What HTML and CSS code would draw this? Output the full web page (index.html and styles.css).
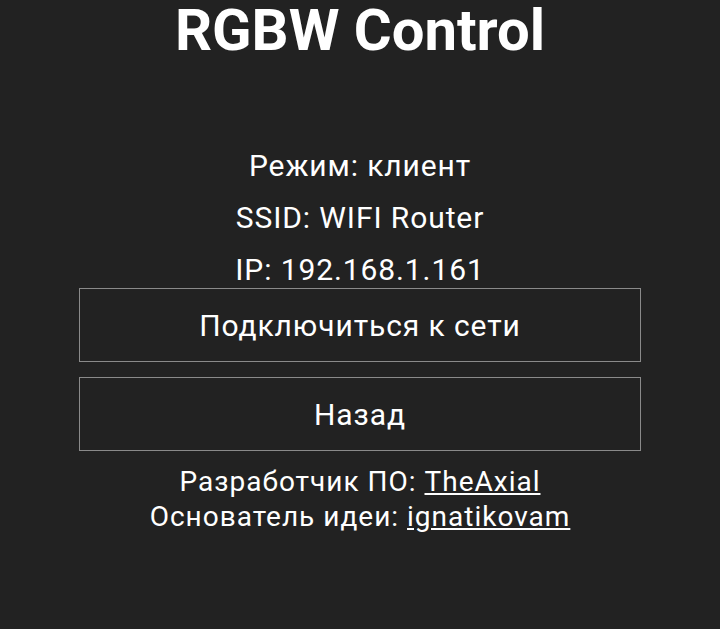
FILE: index.html
```html
<!DOCTYPE html>
<html lang="ru">
<head>
<meta charset="utf-8">
<link rel="stylesheet" href="styles.css">
</head>
<body>
<div class="page">
  <h1 class="title">RGBW Control</h1>
  <div class="info">
    <p class="line">Режим: клиент</p>
    <p class="line">SSID: WIFI Router</p>
    <p class="line">IP: 192.168.1.161</p>
  </div>
  <div class="buttons">
    <button class="btn">Подключиться к сети</button>
    <button class="btn">Назад</button>
  </div>
  <div class="footer">
    <div>Разработчик ПО: <a href="#">TheAxial</a></div>
    <div>Основатель идеи: <a href="#">ignatikovam</a></div>
  </div>
</div>
</body>
</html>
```

FILE: styles.css
```css
html, body {
  margin: 0;
  padding: 0;
  background: #222222;
  color: #ffffff;
  font-family: Roboto, "Noto Sans", sans-serif;
}
.page {
  width: 562px;
  margin: 0 auto;
  text-align: center;
}
.title {
  margin: 0;
  font-size: 58px;
  font-weight: 700;
  line-height: 60px;
  padding-top: 0;
}
.info {
  margin-top: 80px;
}
.line {
  margin: 0;
  font-size: 30px;
  letter-spacing: 0.9px;
  line-height: 52px;
}
.buttons {
  display: flex;
  flex-direction: column;
  gap: 15px;
  margin-top: -8px;
}
.btn {
  display: block;
  width: 100%;
  height: 74px;
  background: transparent;
  color: #ffffff;
  border: 1px solid #8a8a8a;
  font-family: Roboto, "Noto Sans", sans-serif;
  font-size: 30px;
  letter-spacing: 0.9px;
  padding: 0;
}
.footer {
  margin-top: 13px;
  font-size: 28px;
  letter-spacing: 1px;
  line-height: 35px;
}
.footer a {
  color: #ffffff;
  text-decoration: underline;
}
```
